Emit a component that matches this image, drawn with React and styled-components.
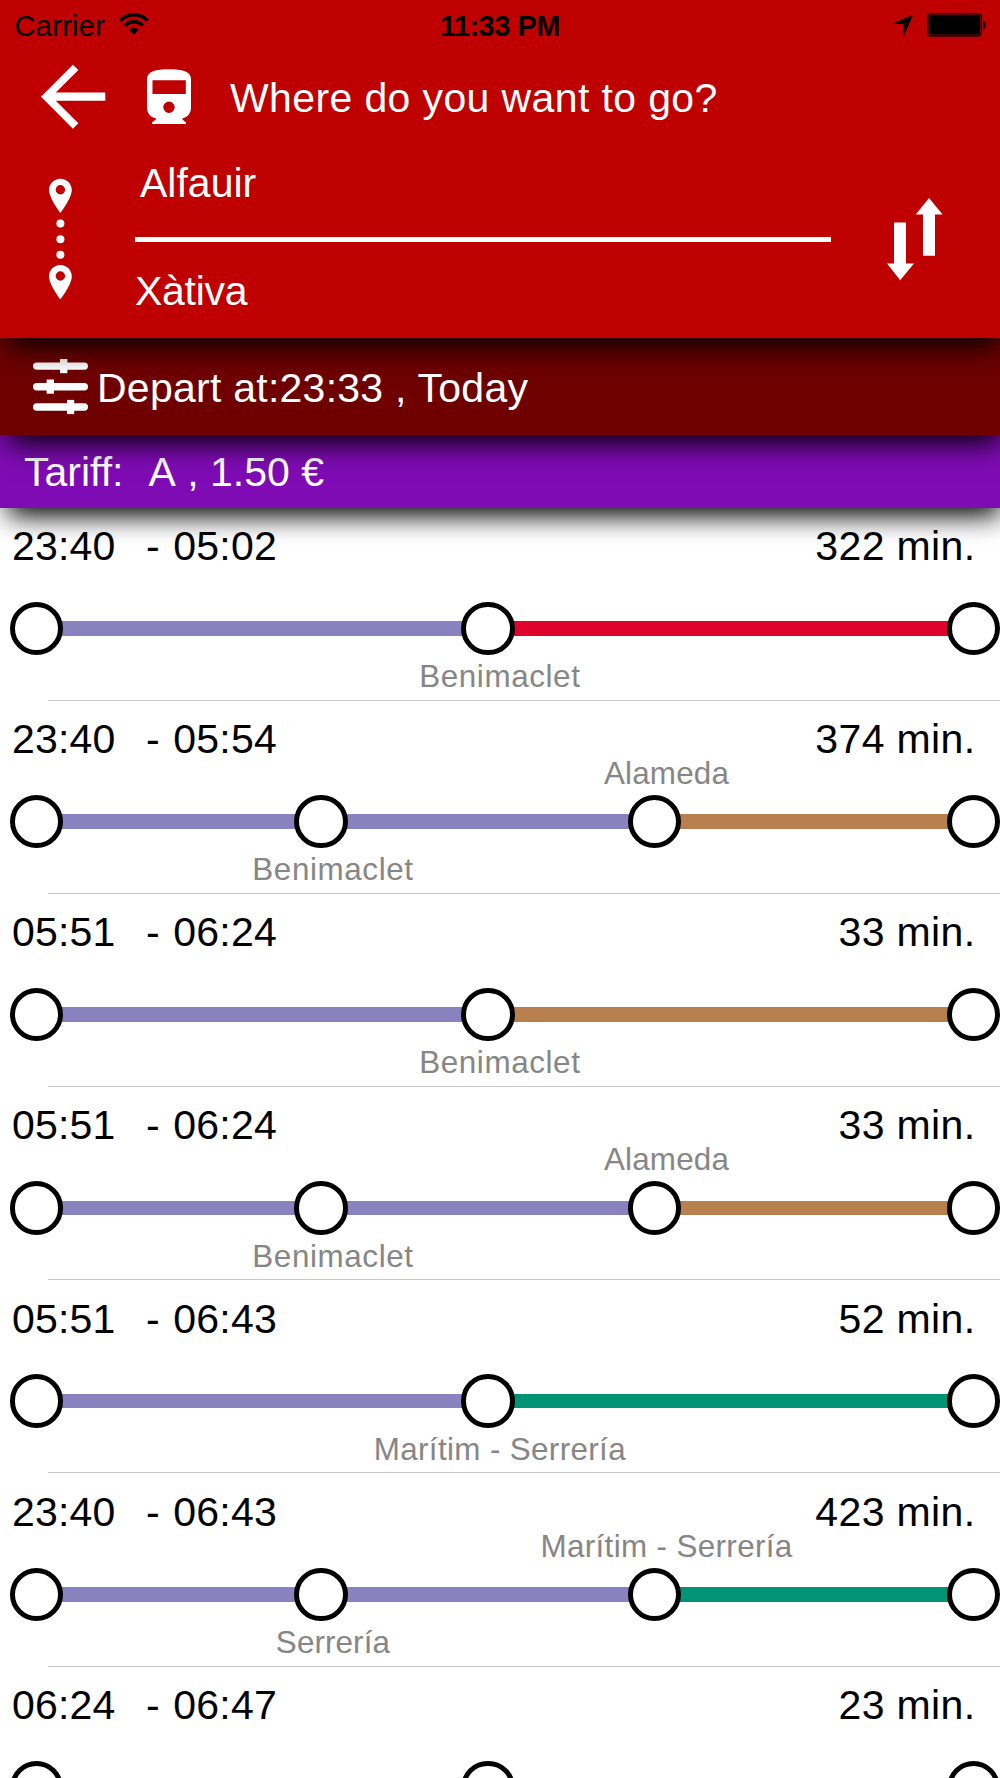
import React from "react";
import styled, { createGlobalStyle } from "styled-components";

const LILAC = "#8883bf";
const RED = "#df032b";
const BROWN = "#b8804f";
const GREEN = "#009374";

const trips = [
  {
    start: "23:40",
    end: "05:02",
    duration: "322 min.",
    legs: [
      { width: 398.1, color: LILAC, below: "Benimaclet" },
      { width: 432, color: RED },
    ],
  },
  {
    start: "23:40",
    end: "05:54",
    duration: "374 min.",
    legs: [
      { width: 231.2, color: LILAC, below: "Benimaclet" },
      { width: 280.1, color: LILAC, above: "Alameda" },
      { width: 265.3, color: BROWN },
    ],
  },
  {
    start: "05:51",
    end: "06:24",
    duration: "33 min.",
    legs: [
      { width: 398.1, color: LILAC, below: "Benimaclet" },
      { width: 432, color: BROWN },
    ],
  },
  {
    start: "05:51",
    end: "06:24",
    duration: "33 min.",
    legs: [
      { width: 231.2, color: LILAC, below: "Benimaclet" },
      { width: 280.1, color: LILAC, above: "Alameda" },
      { width: 265.3, color: BROWN },
    ],
  },
  {
    start: "05:51",
    end: "06:43",
    duration: "52 min.",
    legs: [
      { width: 398.1, color: LILAC, below: "Marítim - Serrería" },
      { width: 432, color: GREEN },
    ],
  },
  {
    start: "23:40",
    end: "06:43",
    duration: "423 min.",
    legs: [
      { width: 231.2, color: LILAC, below: "Serrería" },
      { width: 280.1, color: LILAC, above: "Marítim - Serrería" },
      { width: 265.3, color: GREEN },
    ],
  },
  {
    start: "06:24",
    end: "06:47",
    duration: "23 min.",
    legs: [
      { width: 398.1, color: LILAC },
      { width: 432, color: LILAC },
    ],
  },
];

const tracking = {
  Benimaclet: "0.6px",
  Alameda: "0.2px",
  "Marítim - Serrería": "0.35px",
  Serrería: "0.1px",
};

function WifiIcon() {
  return (
    <svg width="32" height="51" viewBox="0 0 32 51">
      <g fill="none" stroke="#000" strokeWidth="3.6">
        <path d="M2.3 20.8 A18.6 18.6 0 0 1 29.7 20.8" />
        <path d="M7.2 25.6 A12 12 0 0 1 24.8 25.6" />
      </g>
      <path d="M11.4 29.9 A6.2 6.2 0 0 1 20.6 29.9 L16 34.6 Z" fill="#000" />
    </svg>
  );
}

function LocationIcon() {
  return (
    <svg width="22" height="51" viewBox="0 0 22 51">
      <path d="M0 24 L21.3 14.4 L11.5 36.4 V24 Z" fill="#000" />
    </svg>
  );
}

function BatteryIcon() {
  return (
    <svg width="60" height="51" viewBox="0 0 60 51">
      <rect x="0.6" y="13.6" width="54" height="22.6" rx="3.4" fill="#6a0000" stroke="#260000" strokeWidth="1.2" />
      <rect x="2.3" y="15.2" width="50.6" height="19.2" rx="1.6" fill="#000" />
      <path d="M56.3 21 C60 21.4 60 28.6 56.3 29 Z" fill="#000" />
    </svg>
  );
}

function BackIcon() {
  return (
    <svg width="65" height="94" viewBox="0 0 65 94">
      <path
        d="M0 45.8 L31.9 13.7 L37.4 19 L14.8 41.6 H64.3 V49.7 H14.8 L37.4 72.3 L31.9 77.8 Z"
        fill="#fff"
      />
    </svg>
  );
}

function TrainIcon() {
  return (
    <svg width="44" height="94" viewBox="0 0 44 94">
      <path
        fillRule="evenodd"
        fill="#fff"
        d="M0 28 C0 20.5 9 18.3 22 18.3 C35 18.3 44 20.5 44 28 V56.5 C44 62.5 40.5 66.5 35.5 67.2 V68.6 L39 71.6 V73 H5 V71.6 L8.8 68.6 V67.2 C3.5 66.5 0 62.5 0 56.5 Z
           M5.5 29.2 V43 H38.8 V29.2 Z
           M22 50.6 A5.7 5.7 0 1 0 22 62 A5.7 5.7 0 1 0 22 50.6 Z"
      />
    </svg>
  );
}

function Pin({ y }) {
  return (
    <path
      transform={`translate(0 ${y})`}
      fillRule="evenodd"
      fill="#fff"
      d="M11.4 0 C5 0 0 5 0 11.4 C0 19.5 11.4 34.2 11.4 34.2 C11.4 34.2 22.8 19.5 22.8 11.4 C22.8 5 17.8 0 11.4 0 Z
         M11.4 6.3 A4.7 4.7 0 1 1 11.4 15.7 A4.7 4.7 0 1 1 11.4 6.3 Z"
    />
  );
}

function RouteIcon() {
  return (
    <svg width="23" height="193" viewBox="0 0 23 193">
      <Pin y={33.7} />
      <circle cx="11.4" cy="78.6" r="4" fill="#fff" />
      <circle cx="11.4" cy="94.2" r="4" fill="#fff" />
      <circle cx="11.4" cy="109.8" r="4" fill="#fff" />
      <Pin y={120} />
    </svg>
  );
}

function SwapIcon() {
  return (
    <svg width="57" height="193" viewBox="0 0 57 193">
      <path d="M42 53 L55.6 69.4 H48 V110.7 H36 V69.4 H28.8 Z" fill="#fff" />
      <path d="M7 77.4 H19 V118.6 H27 L13.2 135.2 L0 118.6 H7 Z" fill="#fff" />
    </svg>
  );
}

function SlidersIcon() {
  return (
    <svg width="55" height="97" viewBox="0 0 55 97">
      <g fill="#fff">
        <rect x="0" y="24.4" width="55" height="7.4" rx="3.7" />
        <rect x="27" y="21" width="7.4" height="14.2" />
        <rect x="0" y="45" width="55" height="7.4" rx="3.7" />
        <rect x="13.6" y="41.5" width="7.4" height="14.2" />
        <rect x="0" y="65.3" width="55" height="7.4" rx="3.7" />
        <rect x="34" y="61.9" width="7.2" height="14.2" />
      </g>
    </svg>
  );
}

function Trip({ start, end, duration, legs }) {
  return (
    <TripRow>
      <TripTimes>
        <StartTime>{start}</StartTime>
        <EndTime>- {end}</EndTime>
        <Duration>{duration}</Duration>
      </TripTimes>
      <Track>
        <Stop>
          <Circle />
        </Stop>
        {legs.map((leg, i) => (
          <React.Fragment key={i}>
            <Leg $width={leg.width} $color={leg.color} />
            <Stop>
              {leg.above && <LabelAbove $tracking={tracking[leg.above]}>{leg.above}</LabelAbove>}
              <Circle />
              {leg.below && <LabelBelow $tracking={tracking[leg.below]}>{leg.below}</LabelBelow>}
            </Stop>
          </React.Fragment>
        ))}
      </Track>
      <Separator />
    </TripRow>
  );
}

export default function App() {
  return (
    <>
      <GlobalStyle />
      <Screen>
        <Header>
          <StatusBar>
            <StatusLeft>
              <Carrier>Carrier</Carrier>
              <WifiIcon />
            </StatusLeft>
            <Clock>11:33 PM</Clock>
            <StatusRight>
              <LocationIcon />
              <BatteryIcon />
            </StatusRight>
          </StatusBar>
          <TitleBar>
            <BackIcon />
            <TrainIcon />
            <Title>Where do you want to go?</Title>
          </TitleBar>
          <Route>
            <RouteIcon />
            <Fields>
              <Origin>Alfauir</Origin>
              <Divider />
              <Destination>Xàtiva</Destination>
            </Fields>
            <SwapIcon />
          </Route>
        </Header>
        <FilterBar>
          <SlidersIcon />
          <FilterText>Depart at:23:33 , Today</FilterText>
        </FilterBar>
        <TariffBar>
          <span>Tariff:</span>
          <Price>A , 1.50 €</Price>
        </TariffBar>
        <TripList>
          {trips.map((trip, i) => (
            <Trip key={i} {...trip} />
          ))}
        </TripList>
      </Screen>
    </>
  );
}

const GlobalStyle = createGlobalStyle`
  * {
    box-sizing: border-box;
  }

  body {
    margin: 0;
    background: #fff;
    font-family: "Liberation Sans", Arial, sans-serif;
  }

  svg {
    display: block;
    flex: none;
  }
`;

const Screen = styled.div`
  display: flex;
  flex-direction: column;
  width: 1000px;
  height: 1778px;
  overflow: hidden;
  font-size: 41px;
`;

const Bar = styled.div`
  position: relative;
  flex: none;
  color: #fff;
  box-shadow: 4px 12px 27px -4px #000;
`;

const Header = styled(Bar)`
  z-index: 3;
  height: 338px;
  background: #be0000;
`;

const StatusBar = styled.div`
  display: grid;
  grid-template-columns: 1fr auto 1fr;
  height: 51px;
  color: #000;
  font-size: 29px;
  line-height: 52px;
`;

const StatusLeft = styled.div`
  display: flex;
  padding-left: 14.5px;
`;

const Carrier = styled.span`
  width: 103.2px;
  letter-spacing: 0.3px;
`;

const Clock = styled.span`
  font-size: 28.6px;
  font-weight: 700;
  letter-spacing: -0.3px;
`;

const StatusRight = styled.div`
  display: flex;
  justify-content: flex-end;
  gap: 13px;
  padding-right: 13px;
`;

const TitleBar = styled.div`
  display: flex;
  height: 94px;
  padding-left: 40.7px;
  gap: 41.3px;
`;

const Title = styled.span`
  margin-left: -2.3px;
  line-height: 94px;
  letter-spacing: 0.38px;
  white-space: nowrap;
`;

const Route = styled.div`
  display: flex;
  height: 193px;
  padding-left: 49px;
`;

const Fields = styled.div`
  width: 696px;
  margin: 0 56.3px 0 63px;
`;

const Origin = styled.div`
  padding: 1px 0 0 5px;
  line-height: 75px;
`;

const Divider = styled.div`
  height: 5px;
  margin-top: 15.7px;
  background: #fff;
`;

const Destination = styled.div`
  padding-top: 24.1px;
  line-height: 50px;
  letter-spacing: -0.3px;
`;

const FilterBar = styled(Bar)`
  z-index: 2;
  display: flex;
  height: 97px;
  padding-left: 33px;
  background: #6e0000;
`;

const FilterText = styled.span`
  margin-left: 9px;
  padding-top: 2.3px;
  line-height: 97px;
  letter-spacing: 0.25px;
`;

const TariffBar = styled(Bar)`
  z-index: 1;
  display: flex;
  gap: 25px;
  height: 72.5px;
  padding: 1px 0 0 24px;
  line-height: 72.3px;
  background: #7f0bb5;
`;

const Price = styled.span`
  font-kerning: none;
`;

const TripList = styled.div`
  flex: 1;
  min-height: 0;
  color: #000;
`;

const TripRow = styled.div`
  display: flex;
  flex-direction: column;
  height: 193.2px;
  padding-top: 14.3px;
`;

const TripTimes = styled.div`
  display: flex;
  height: 48px;
  padding: 0 24.6px 0 11.9px;
  line-height: 48px;
  letter-spacing: 0.2px;
`;

const StartTime = styled.span`
  width: 134px;
`;

const EndTime = styled.span`
  word-spacing: 2px;
`;

const Duration = styled.span`
  margin-left: auto;
  letter-spacing: 0.35px;
`;

const Track = styled.div`
  display: flex;
  height: 128px;
  padding-left: 9.5px;
`;

const Stop = styled.div`
  flex: none;
  display: grid;
  grid-template-columns: 53.5px;
  grid-template-rows: 31.8px 53.5px 42.7px;
  justify-items: center;
  width: 53.5px;
`;

const Circle = styled.div`
  z-index: 1;
  grid-row: 2;
  width: 53.5px;
  height: 53.5px;
  border: 5px solid #000;
  border-radius: 50%;
  background: #fff;
`;

const Leg = styled.div`
  flex: none;
  width: ${({ $width }) => $width + 6}px;
  height: 14.5px;
  margin: 51.3px -3px 0;
  background: ${({ $color }) => $color};
`;

const Label = styled.span`
  margin-left: 24px;
  color: #868686;
  font-size: 31.4px;
  letter-spacing: ${({ $tracking }) => $tracking};
  white-space: nowrap;
`;

const LabelAbove = styled(Label)`
  grid-row: 1;
  line-height: 22.4px;
`;

const LabelBelow = styled(Label)`
  grid-row: 3;
  line-height: 44.8px;
`;

const Separator = styled.div`
  height: 1px;
  margin: auto 0 0 48.3px;
  background: #c8c7cc;
`;
